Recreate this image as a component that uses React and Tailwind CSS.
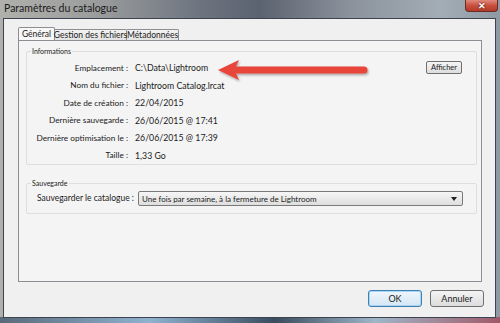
import React from "react";

const font = { fontFamily: 'Lato, "Noto Sans", sans-serif' };

function Row({ label, value, children }) {
  return (
    <div className="flex items-center h-[17.5px]">
      <div className="w-[101px] text-right whitespace-nowrap text-[8.25px]">{label}</div>
      <div className="ml-[7px] whitespace-nowrap flex-1 text-[8.75px]">{value}</div>
      {children}
    </div>
  );
}

export default function App() {
  return (
    <div
      className="relative w-[500px] h-[323px] overflow-hidden text-[8.5px] text-[#1b1b1b]"
      style={font}
    >
      {/* glass frame background */}
      <div className="absolute inset-0 bg-[linear-gradient(90deg,#b0b0ac_0%,#9a9c9c_20%,#6d7480_40%,#5c6370_52%,#8b929c_70%,#a3adb6_88%,#8e99a4_100%)]" />
      <div className="absolute left-0 right-0 bottom-0 h-[6px] bg-[linear-gradient(90deg,#5a6a7a,#8fb2d0_30%,#3a4c5e_55%,#9fb6c8_75%,#a05a6a)]" />
      <div className="relative flex flex-col h-full">
        {/* title bar */}
        <div className="h-[18px] flex items-start justify-between pl-[4px]">
          <span className="text-[10.5px] leading-[17px] text-[#1a1a1a]">Paramètres du catalogue</span>
          <div className="mr-[2px] w-[33px] h-[12px] rounded-b-[4px] border border-t-0 border-[#6b2a22] bg-[linear-gradient(180deg,#e08a7c_0%,#c9503f_50%,#b23a28_100%)] flex items-center justify-center">
            <span className="text-white font-bold text-[9px] leading-none [text-shadow:0_0_2px_#3a0d08]">✕</span>
          </div>
        </div>
        {/* client area */}
        <div className="ml-[3px] mr-[4px] h-[300px] border border-[#3d4450] bg-[#f0f0f0] flex flex-col">
          {/* tabs */}
          <div className="flex items-end ml-[14px] mt-[8px] h-[13px] relative z-10">
            <div className="h-[13px] border border-b-0 border-[#8c8e94] bg-[#f7f7f7] flex items-center justify-center rounded-t-[2px] w-[37px] whitespace-nowrap">Général</div>
            <div className="h-[11px] border border-b-0 border-l-0 border-[#8c8e94] bg-[linear-gradient(180deg,#f2f2f2,#e3e3e3)] flex items-center justify-center rounded-tr-[2px] w-[72px] whitespace-nowrap">Gestion des fichiers</div>
            <div className="h-[11px] border border-b-0 border-l-0 border-[#8c8e94] bg-[linear-gradient(180deg,#f2f2f2,#e3e3e3)] flex items-center justify-center rounded-tr-[2px] w-[52px] whitespace-nowrap">Métadonnées</div>
          </div>
          {/* tab panel */}
          <div className="ml-[14px] w-[464px] h-[242px] border border-[#8c8e94] bg-[#f4f4f4] pl-[7px] pr-[4px] pt-[10px] flex flex-col">
            {/* Informations group */}
            <div className="relative h-[114px] border border-[#dedede] rounded-[2px] pt-[7px]">
              <span className="absolute -top-[6px] left-[4px] px-[1px] bg-[#f4f4f4] text-[7px] leading-[11px]">Informations</span>
              <Row label="Emplacement :" value="C:\Data\Lightroom">
                <button className="mr-[14px] w-[36px] h-[13px] rounded-[2px] border border-[#707070] bg-[linear-gradient(180deg,#f5f5f5,#dddddd)] text-[7.5px] leading-none flex items-center justify-center">Afficher</button>
              </Row>
              <Row label="Nom du fichier :" value="Lightroom Catalog.lrcat" />
              <Row label="Date de création :" value="22/04/2015" />
              <Row label="Dernière sauvegarde :" value="26/06/2015 @ 17:41" />
              <Row label="Dernière optimisation le :" value="26/06/2015 @ 17:39" />
              <Row label="Taille :" value="1,33 Go" />
            </div>
            {/* Sauvegarde group */}
            <div className="relative mt-[18px] h-[31px] border border-[#dedede] rounded-[2px] flex items-center">
              <span className="absolute -top-[6px] left-[4px] px-[1px] bg-[#f4f4f4] text-[7px] leading-[11px]">Sauvegarde</span>
              <div className="w-[107px] text-right whitespace-nowrap">Sauvegarder le catalogue :</div>
              <div className="ml-[4px] w-[325px] h-[15px] rounded-[2px] border border-[#7a7a7a] bg-[linear-gradient(180deg,#f6f6f6,#dedede)] flex items-center justify-between pl-[3px] pr-[5px]">
                <span className="whitespace-nowrap text-[8px]">Une fois par semaine, à la fermeture de Lightroom</span>
                <svg width="6" height="4" viewBox="0 0 6 4"><path d="M0 0h6L3 4z" fill="#222" /></svg>
              </div>
            </div>
          </div>
          {/* buttons */}
          <div className="flex justify-end gap-[8px] mt-[8px] mr-[11px]">
            <button className="w-[54px] h-[17px] rounded-[3px] border border-[#3c7fb1] bg-[linear-gradient(180deg,#eef6fc,#d4e6f4)] shadow-[inset_0_0_0_1px_#a9d6f5] text-[9px]">OK</button>
            <button className="w-[54px] h-[17px] rounded-[3px] border border-[#707070] bg-[linear-gradient(180deg,#f4f4f4,#dcdcdc)] text-[9px]">Annuler</button>
          </div>
        </div>
      </div>
      {/* red annotation arrow */}
      <svg className="absolute left-[212px] top-[54px]" width="162" height="32" viewBox="0 0 162 32">
        <defs>
          <filter id="sh" x="-10%" y="-30%" width="120%" height="160%">
            <feDropShadow dx="1" dy="1.5" stdDeviation="1" floodColor="#000" floodOpacity="0.35" />
          </filter>
        </defs>
        <g filter="url(#sh)" fill="#e8443a">
          <path d="M6 16 L27 6 L24 12.5 L152 12.5 A3.5 3.5 0 0 1 152 19.5 L24 19.5 L27 26 Z" />
        </g>
      </svg>
    </div>
  );
}
